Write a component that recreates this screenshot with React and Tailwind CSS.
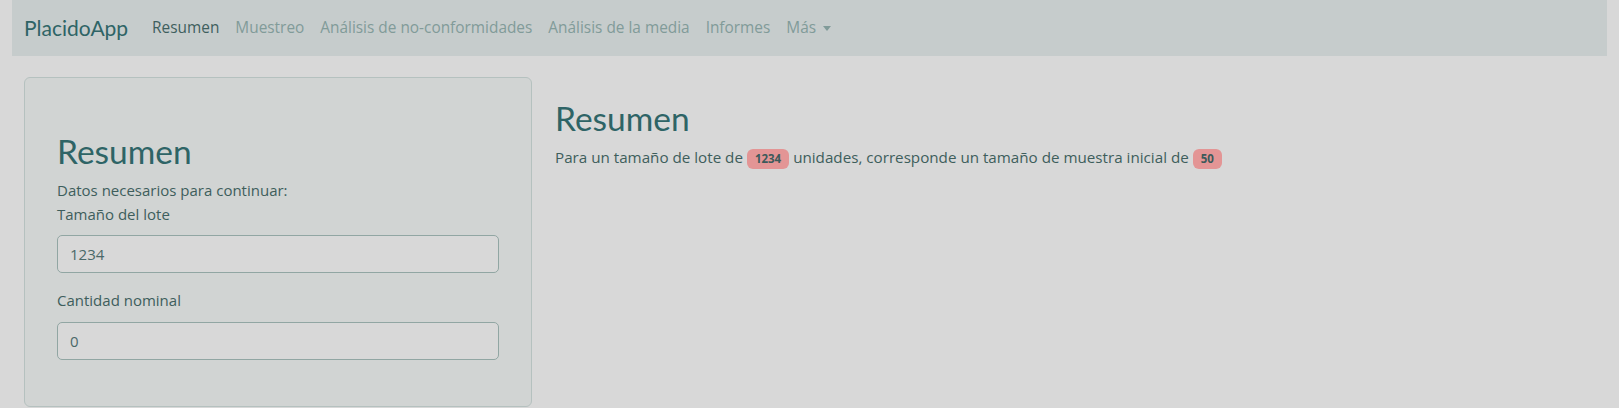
import React from "react";

const body = { fontFamily: '"Open Sans", "Noto Sans", sans-serif' };
const head = { fontFamily: '"Lato", "Noto Sans", sans-serif' };

export default function App() {
  return (
    <div className="min-h-[408px] bg-[#d8d8d8] text-[#3e5e5c] text-[15px] leading-6" style={body}>
      <nav className="mx-[12px] h-[56px] bg-[#c6cccc] flex items-center pl-[12px]">
        <span className="text-[21px] text-[#2e6466] mr-[16px]" style={head}>PlacidoApp</span>
        <div className="flex items-center text-[15.4px]">
          <span className="px-[8px] text-[#3f5f5e]">Resumen</span>
          <span className="px-[8px] text-[#819b99]">Muestreo</span>
          <span className="px-[8px] text-[#819b99]">Análisis de no-conformidades</span>
          <span className="px-[8px] text-[#819b99]">Análisis de la media</span>
          <span className="px-[8px] text-[#819b99]">Informes</span>
          <span className="px-[8px] text-[#819b99] flex items-center">
            Más
            <span className="ml-[7px] w-0 h-0 border-l-[4px] border-r-[4px] border-t-[5px] border-l-transparent border-r-transparent border-t-[#819b99]"></span>
          </span>
        </div>
      </nav>
      <div className="flex pt-[21px]">
        <div className="ml-[24px] w-[508px] h-[330px] bg-[#d1d4d3] border border-[#b5c1bf] rounded-[6px] pt-[54px] px-[32px] shrink-0">
          <h2 className="text-[33.5px] leading-[38px] text-[#2e6466] mb-[8px]" style={head}>Resumen</h2>
          <p>Datos necesarios para continuar:</p>
          <label className="block mb-[9px]">Tamaño del lote</label>
          <div className="h-[38px] w-[442px] border border-[#91a6a3] rounded-[5px] bg-[#d8d8d8] px-[12px] flex items-center text-[#4b6868] mb-[15px]">1234</div>
          <label className="block mb-[10px]">Cantidad nominal</label>
          <div className="h-[38px] w-[442px] border border-[#91a6a3] rounded-[5px] bg-[#d8d8d8] px-[12px] flex items-center text-[#4b6868]">0</div>
        </div>
        <div className="ml-[23px] pt-[22px]">
          <h2 className="text-[33.5px] leading-[38px] text-[#2e6466] mb-[8px]" style={head}>Resumen</h2>
          <p className="text-[15.2px]">
            Para un tamaño de lote de{" "}
            <span className="inline-block bg-[#e39595] text-[#3c5a5a] text-[11.5px] font-bold leading-[12px] px-[8px] py-[4px] rounded-[6px] align-middle">1234</span>{" "}
            unidades, corresponde un tamaño de muestra inicial de{" "}
            <span className="inline-block bg-[#e39595] text-[#3c5a5a] text-[11.5px] font-bold leading-[12px] px-[8px] py-[4px] rounded-[6px] align-middle">50</span>
          </p>
        </div>
      </div>
    </div>
  );
}
